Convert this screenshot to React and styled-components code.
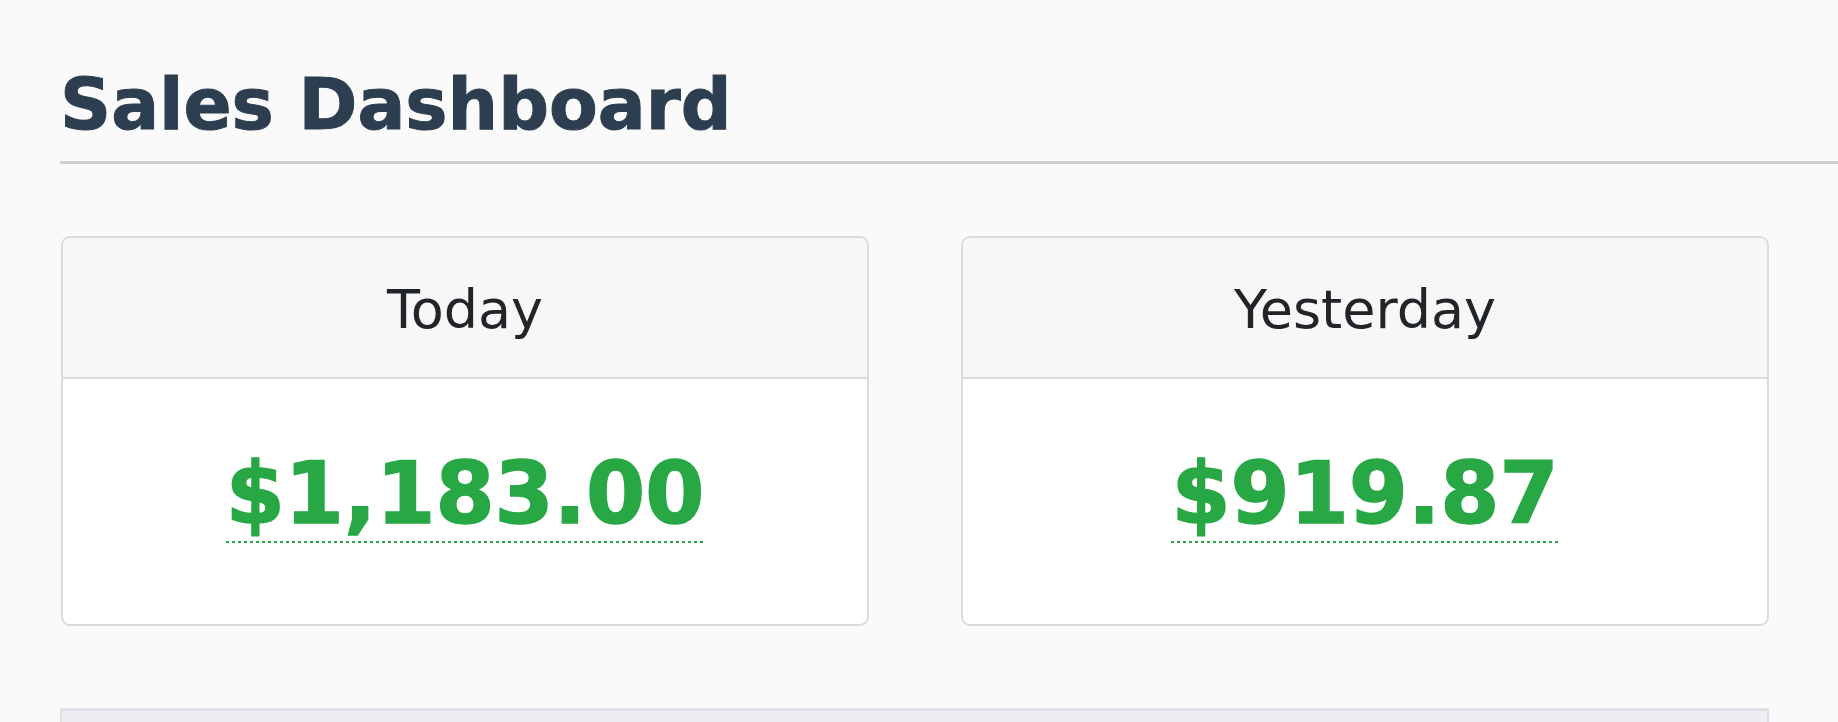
import React from "react";
import styled, { createGlobalStyle } from "styled-components";

const GlobalStyle = createGlobalStyle`
  html, body {
    margin: 0;
    padding: 0;
    background: #fafafa;
  }
  body {
    font-family: "DejaVu Sans", Verdana, sans-serif;
  }
`;

const Page = styled.div`
  padding: 63px 69px 0 60px;
  min-height: 722px;
  box-sizing: border-box;
  overflow: hidden;
`;

const Header = styled.header`
  margin-right: -69px;
  padding-bottom: 15px;
  border-bottom: 3px solid #d0d0cb;
`;

const Title = styled.h1`
  margin: 0;
  font-family: "DejaVu Sans", Verdana, sans-serif;
  font-size: 71px;
  font-weight: 700;
  line-height: normal;
  color: #2c3e50;
  -webkit-text-stroke: 1px #2c3e50;
`;

const CardGrid = styled.section`
  display: grid;
  grid-template-columns: 1fr 1fr;
  column-gap: 92px;
  margin: 72px 0 0 1px;
`;

const Card = styled.article`
  border: 2px solid #dbdbdb;
  border-radius: 9px;
  background: #ffffff;
  overflow: hidden;
`;

const CardHeader = styled.div`
  background: #f7f7f7;
  border-bottom: 2px solid #d8d8d8;
  padding: 40px 0 36px;
  text-align: center;
  font-family: "DejaVu Sans", Verdana, sans-serif;
  font-size: 54px;
  line-height: normal;
  color: #212529;
`;

const CardBody = styled.div`
  padding: 65px 0 81px;
  text-align: center;
  line-height: normal;
`;

const Amount = styled.abbr`
  font-family: "DejaVu Sans", Verdana, sans-serif;
  font-weight: 700;
  font-size: 85px;
  color: #28a745;
  -webkit-text-stroke: 1.5px #28a745;
  text-decoration: none;
  background-image: linear-gradient(
    to right,
    #28a745 0,
    #28a745 3px,
    transparent 3px,
    transparent 6px
  );
  background-repeat: repeat-x;
  background-position: left bottom;
  background-size: 6px 2px;
  cursor: help;
`;

const Panel = styled.section`
  margin-top: 82px;
  height: 120px;
  background: #eceef2;
  border: 2px solid #dde0e6;
  border-top-width: 3px;
`;

const stats = [
  { label: "Today", value: "$1,183.00" },
  { label: "Yesterday", value: "$919.87" },
];

export default function App() {
  return (
    <>
      <GlobalStyle />
      <Page>
        <Header>
          <Title>Sales Dashboard</Title>
        </Header>
        <CardGrid>
          {stats.map((s) => (
            <Card key={s.label}>
              <CardHeader>{s.label}</CardHeader>
              <CardBody>
                <Amount title={`${s.label} sales`}>{s.value}</Amount>
              </CardBody>
            </Card>
          ))}
        </CardGrid>
        <Panel />
      </Page>
    </>
  );
}
